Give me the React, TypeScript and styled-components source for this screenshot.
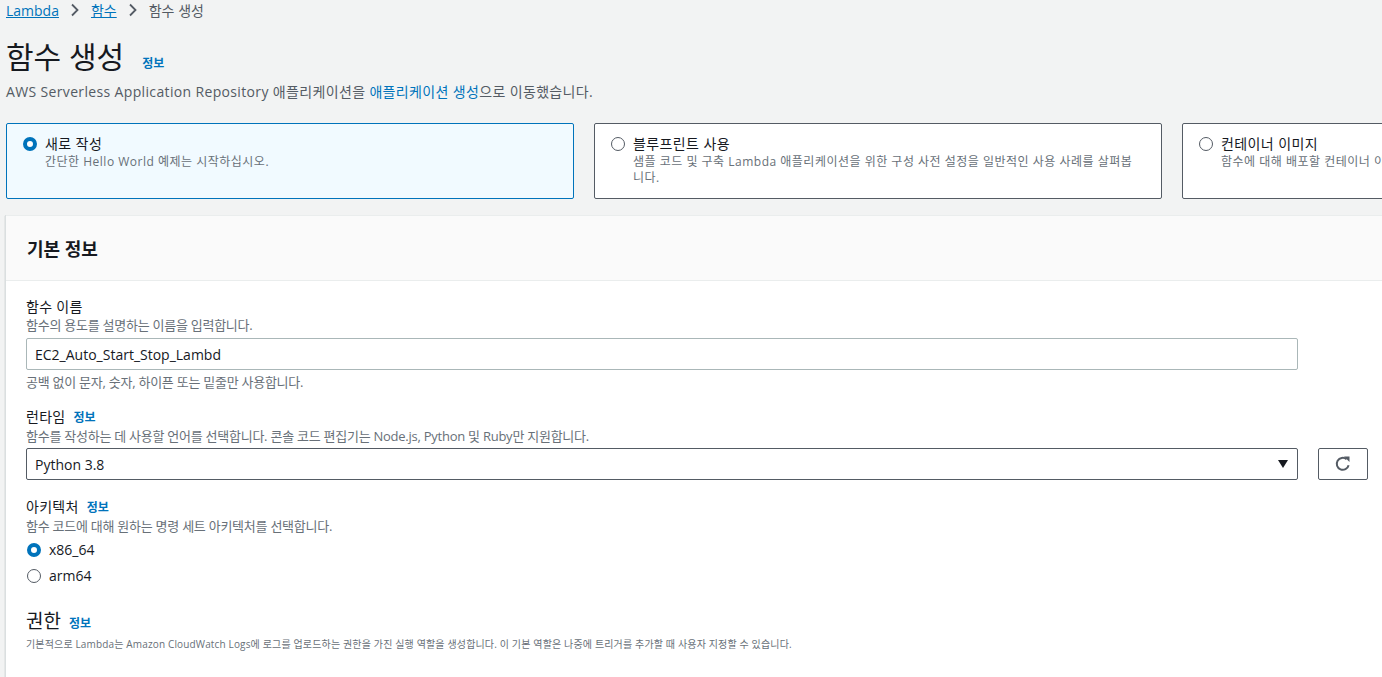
import styled, { createGlobalStyle } from 'styled-components'

/**
 * Constants
 */
const FONT = `"Open Sans", "Noto Sans CJK KR", sans-serif`
const BLUE = '#0073bb'
const TEXT = '#16191f'
const MUTED = '#687078'

/**
 * Style
 */
const GlobalStyle = createGlobalStyle`
  html, body {
    margin: 0;
    padding: 0;
    background: #f2f3f3;
    font-family: ${FONT};
    color: ${TEXT};
    overflow: hidden;
  }
`

const Page = styled.div`
  width: 1382px;
  height: 677px;
  overflow: hidden;
  padding: 0 0 0 6px;
  box-sizing: border-box;
`

const Breadcrumbs = styled.nav`
  display: flex;
  align-items: center;
  gap: 9px;
  height: 20px;
  font-size: 14px;
  color: #545b64;
`

const Crumb = styled.a`
  color: ${BLUE};
  text-decoration: underline;
`

const Chevron = styled.svg`
  width: 14px;
  height: 14px;
`

const TitleRow = styled.div`
  display: flex;
  align-items: baseline;
  gap: 18px;
  margin-top: 17px;
`

const Title = styled.h1`
  margin: 0;
  font-size: 30px;
  font-weight: 400;
  line-height: 40px;
`

const InfoLink = styled.a`
  color: ${BLUE};
  font-size: 12px;
  font-weight: 700;
  letter-spacing: 0;
`

const Lead = styled.p`
  margin: 5px 0 0;
  font-size: 14px;
  letter-spacing: 0.35px;
  color: #545b64;
  line-height: 20px;

  a {
    color: ${BLUE};
  }
`

const Tiles = styled.div`
  display: grid;
  grid-template-columns: repeat(3, 568px);
  gap: 20px;
  margin-top: 21px;
`

const Tile = styled.div<{ $selected?: boolean }>`
  display: flex;
  gap: 8px;
  height: 76px;
  box-sizing: border-box;
  padding: 10px 16px;
  border: 1px solid ${(p) => (p.$selected ? BLUE : '#545b64')};
  border-radius: 2px;
  background: ${(p) => (p.$selected ? '#f1faff' : '#fff')};
`

const Radio = styled.span<{ $checked?: boolean }>`
  flex: none;
  width: 14px;
  height: 14px;
  margin-top: 3px;
  box-sizing: border-box;
  border-radius: 50%;
  border: ${(p) => (p.$checked ? `4px solid ${BLUE}` : `1px solid #545b64`)};
  background: #fff;
`

const TileText = styled.div`
  display: flex;
  flex-direction: column;
  padding-right: 8px;
`

const TileTitle = styled.span`
  font-size: 14px;
  line-height: 20px;
  letter-spacing: 0.4px;
`

const TileDesc = styled.span`
  font-size: 12px;
  line-height: 16px;
  letter-spacing: 0.5px;
  color: ${MUTED};
`

const Panel = styled.section`
  margin: 16px 0 0 -1px;
  width: 1400px;
  background: #fff;
  border-left: 1px solid #dadfe0;
  box-shadow: 0 1px 1px 0 rgba(0, 28, 36, 0.3);
`

const PanelHeader = styled.header`
  height: 64px;
  display: flex;
  align-items: center;
  padding: 0 21px;
  background: #fafafa;
  border-top: 1px solid #eaeded;
  border-bottom: 1px solid #eaeded;

  h2 {
    margin: 0;
    font-size: 18px;
    font-weight: 700;
  }
`

const PanelBody = styled.div`
  padding: 16px 20px 30px;
  display: flex;
  flex-direction: column;
  gap: 17px;
`

const Field = styled.div`
  display: flex;
  flex-direction: column;
`

const Label = styled.div`
  display: flex;
  align-items: baseline;
  gap: 8px;
  font-size: 14px;
  line-height: 20px;
  letter-spacing: 0.3px;
`

const Desc = styled.div`
  font-size: 13px;
  line-height: 16px;
  letter-spacing: -0.25px;
  color: ${MUTED};
`

const SmallDesc = styled(Desc)`
  font-size: 10px;
  letter-spacing: 0.15px;
`

const ControlRow = styled.div<{ $gap?: number }>`
  display: flex;
  gap: 20px;
  margin-top: ${(p) => p.$gap ?? 5}px;
`

const Input = styled.div`
  width: 1272px;
  height: 32px;
  box-sizing: border-box;
  border: 1px solid #aab7b8;
  border-radius: 2px;
  padding: 0 8px;
  display: flex;
  align-items: center;
  justify-content: space-between;
  font-size: 14px;
  background: #fff;
`

const SelectBox = styled(Input)`
  border-color: #545b64;
`

const IconButton = styled.button`
  width: 50px;
  height: 32px;
  border: 1px solid #545b64;
  border-radius: 2px;
  background: #fff;
  display: flex;
  align-items: center;
  justify-content: center;
  padding: 0;
`

const Hint = styled(Desc)`
  margin-top: 4px;
`

const RadioGroup = styled.div`
  display: flex;
  flex-direction: column;
  gap: 6px;
  margin-top: 6px;
`

const RadioOption = styled.label`
  display: flex;
  align-items: center;
  gap: 8px;
  font-size: 14px;
  line-height: 20px;
  padding-left: 1px;

  ${Radio} {
    margin-top: 0;
  }
`

const SectionTitle = styled.div`
  display: flex;
  align-items: baseline;
  gap: 8px;
  margin-top: 6px;
  font-size: 19px;
  line-height: 24px;
`

/**
 * Component
 */
const tiles = [
  { title: '새로 작성', desc: '간단한 Hello World 예제는 시작하십시오.', selected: true },
  {
    title: '블루프린트 사용',
    desc: '샘플 코드 및 구축 Lambda 애플리케이션을 위한 구성 사전 설정을 일반적인 사용 사례를 살펴봅니다.'
  },
  { title: '컨테이너 이미지', desc: '함수에 대해 배포할 컨테이너 이미지를 선택합니다.' }
]

const ChevronIcon = () => (
  <Chevron viewBox="0 0 14 14">
    <path d="M4 1.5 9.5 7 4 12.5" fill="none" stroke="#545b64" strokeWidth="1.8" />
  </Chevron>
)

const App = (): JSX.Element => {
  return (
    <Page>
      <GlobalStyle />
      <Breadcrumbs>
        <Crumb>Lambda</Crumb>
        <ChevronIcon />
        <Crumb>함수</Crumb>
        <ChevronIcon />
        <span>함수 생성</span>
      </Breadcrumbs>
      <TitleRow>
        <Title>함수 생성</Title>
        <InfoLink>정보</InfoLink>
      </TitleRow>
      <Lead>
        AWS Serverless Application Repository 애플리케이션을 <a>애플리케이션 생성</a>으로 이동했습니다.
      </Lead>
      <Tiles>
        {tiles.map((t) => (
          <Tile key={t.title} $selected={t.selected}>
            <Radio $checked={t.selected} />
            <TileText>
              <TileTitle>{t.title}</TileTitle>
              <TileDesc>{t.desc}</TileDesc>
            </TileText>
          </Tile>
        ))}
      </Tiles>
      <Panel>
        <PanelHeader>
          <h2>기본 정보</h2>
        </PanelHeader>
        <PanelBody>
          <Field>
            <Label>함수 이름</Label>
            <Desc>함수의 용도를 설명하는 이름을 입력합니다.</Desc>
            <ControlRow>
              <Input>EC2_Auto_Start_Stop_Lambd</Input>
            </ControlRow>
            <Hint>공백 없이 문자, 숫자, 하이픈 또는 밑줄만 사용합니다.</Hint>
          </Field>
          <Field>
            <Label>
              런타임 <InfoLink>정보</InfoLink>
            </Label>
            <Desc>함수를 작성하는 데 사용할 언어를 선택합니다. 콘솔 코드 편집기는 Node.js, Python 및 Ruby만 지원합니다.</Desc>
            <ControlRow $gap={4}>
              <SelectBox>
                Python 3.8
                <svg width="12" height="10" viewBox="0 0 12 10">
                  <path d="M1 1h10L6 9z" fill="#16191f" />
                </svg>
              </SelectBox>
              <IconButton>
                <svg width="20" height="20" viewBox="0 0 20 20">
                  <path
                    d="M15.6 11.2A6 6 0 1 1 13.6 5.2"
                    fill="none"
                    stroke="#545b64"
                    strokeWidth="2"
                  />
                  <path d="M11 2.5h5.5V8z" fill="#545b64" />
                </svg>
              </IconButton>
            </ControlRow>
          </Field>
          <Field>
            <Label>
              아키텍처 <InfoLink>정보</InfoLink>
            </Label>
            <Desc>함수 코드에 대해 원하는 명령 세트 아키텍처를 선택합니다.</Desc>
            <RadioGroup>
              <RadioOption>
                <Radio $checked />
                x86_64
              </RadioOption>
              <RadioOption>
                <Radio />
                arm64
              </RadioOption>
            </RadioGroup>
          </Field>
          <Field>
            <SectionTitle>
              권한 <InfoLink>정보</InfoLink>
            </SectionTitle>
            <SmallDesc>
              기본적으로 Lambda는 Amazon CloudWatch Logs에 로그를 업로드하는 권한을 가진 실행 역할을 생성합니다. 이 기본 역할은 나중에 트리거를 추가할 때 사용자 지정할 수 있습니다.
            </SmallDesc>
          </Field>
        </PanelBody>
      </Panel>
    </Page>
  )
}

export default App
